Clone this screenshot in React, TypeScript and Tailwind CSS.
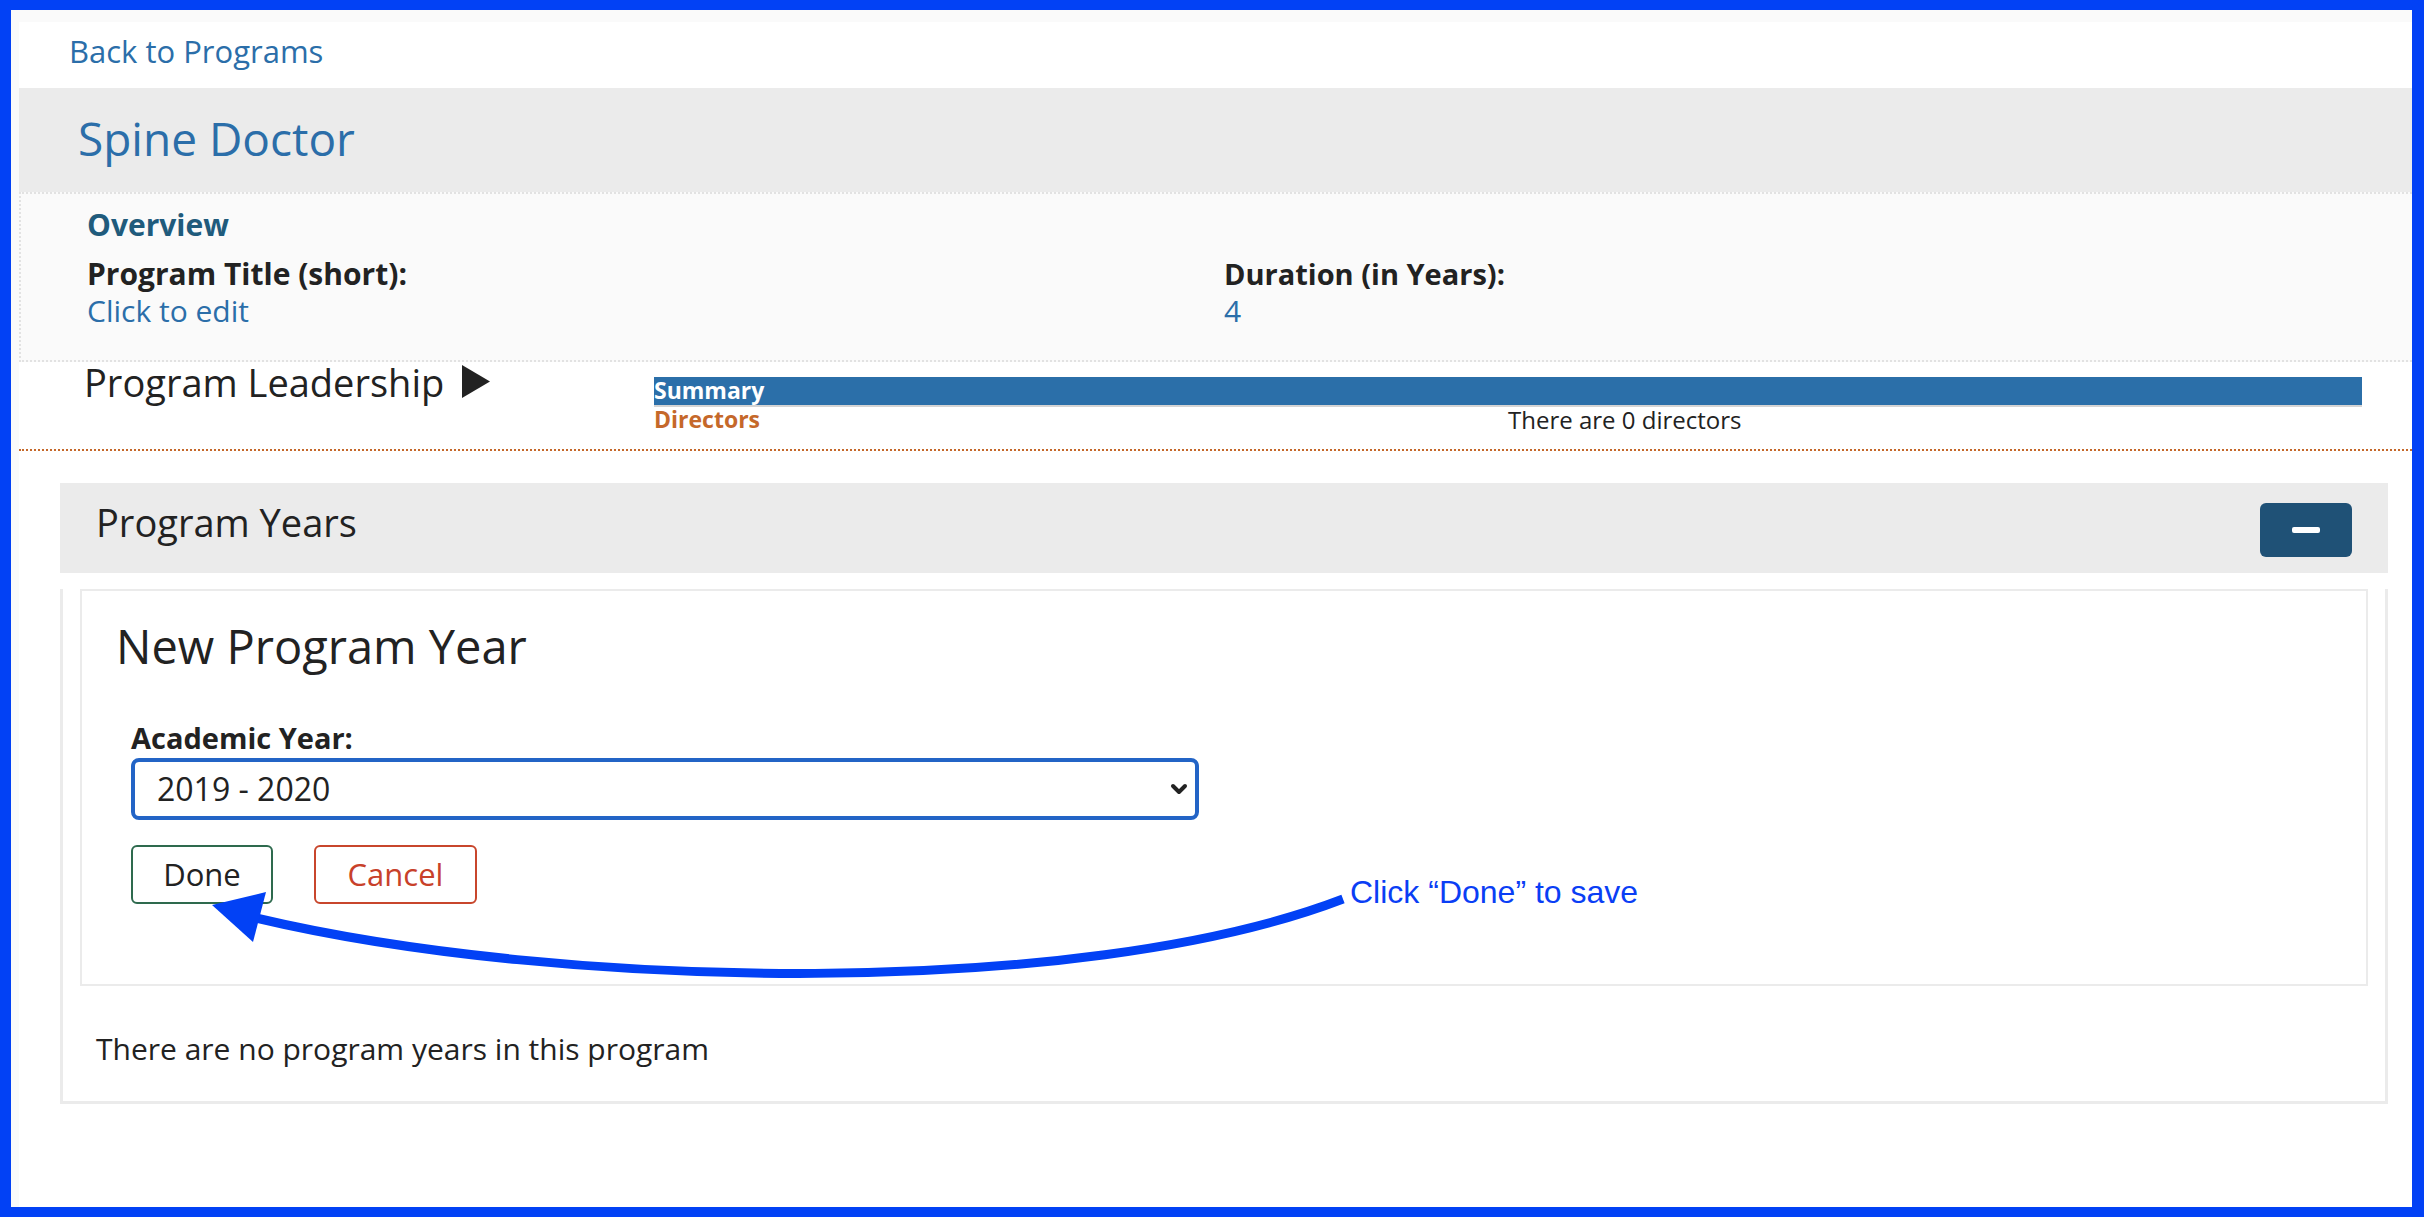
import { ChevronDown } from 'lucide-react';

const font = { fontFamily: '"Open Sans", Lato, sans-serif' };

function Overview() {
  return (
    <div className="border-y-2 border-l-2 border-dotted border-[#e2e2e2] bg-[#fafafa] pb-[30px] pl-[66px] pr-[51px] pt-[16px]">
      <h2 className="text-[30px] font-bold leading-[30px] text-[#1f5b7c]">Overview</h2>
      <div className="mt-[16px] grid grid-cols-2">
        <div>
          <div className="text-[30px] font-bold leading-[35px] text-[#222]">Program Title (short):</div>
          <div className="text-[30px] leading-[39px] text-[#2b6ea9]">Click to edit</div>
        </div>
        <div>
          <div className="text-[29px] font-bold leading-[35px] text-[#222]">Duration (in Years):</div>
          <div className="text-[30px] leading-[39px] text-[#2b6ea9]">4</div>
        </div>
      </div>
    </div>
  );
}

function Leadership() {
  return (
    <div className="flex h-[89px] border-b-2 border-dotted border-[#c5682a]">
      <div className="flex w-[635px] shrink-0 items-start pl-[65px]">
        <span className="mt-[1px] text-[38px] leading-[38px] text-[#222]">Program Leadership</span>
        <svg className="ml-[18px] mt-[3px]" width="28" height="33" viewBox="0 0 28 33">
          <polygon points="0,0 28,16.5 0,33" fill="#222" />
        </svg>
      </div>
      <div className="mt-[15px] w-[1708px]">
        <div className="h-[30px] border-b-2 border-[#d4d4d4] bg-[#2b6fa9] text-[23px] font-bold leading-[26px] text-white">
          Summary
        </div>
        <div className="grid grid-cols-2 leading-[25px]">
          <span className="text-[23px] font-bold text-[#c5682a]">Directors</span>
          <span className="text-[24px] text-[#222]">There are 0 directors</span>
        </div>
      </div>
    </div>
  );
}

function NewProgramYear() {
  return (
    <div className="mx-[17px] mt-[16px] border-2 border-[#ebebeb] pb-[80px] pl-[34px] pt-[33px]">
      <h3 className="text-[47px] font-medium leading-[45px] text-[#222]">New Program Year</h3>
      <div className="mt-[53px] pl-[15px]">
        <label className="block text-[29px] font-bold leading-[31px] text-[#222]">Academic Year:</label>
        <div className="relative mt-[5px] w-[1068px]">
          <select
            className="h-[62px] w-full appearance-none rounded-[8px] border-4 border-[#2364c6] bg-white pl-[22px] text-[32px] text-[#222] outline-none"
            defaultValue="2019"
          >
            <option value="2019">2019 - 2020</option>
          </select>
          <ChevronDown
            className="pointer-events-none absolute right-[8px] top-[19px] text-[#222]"
            size={24}
            strokeWidth={4}
          />
        </div>
        <div className="mt-[25px] flex gap-[41px]">
          <button className="h-[59px] w-[142px] rounded-[6px] border-2 border-[#2e6a4e] bg-white text-[31px] leading-[31px] text-[#222]">
            Done
          </button>
          <button className="h-[59px] w-[163px] rounded-[6px] border-2 border-[#c8462c] bg-white text-[31px] leading-[31px] text-[#c8412a]">
            Cancel
          </button>
        </div>
      </div>
    </div>
  );
}

function ProgramYears() {
  return (
    <div className="ml-[41px] mr-[24px] mt-[32px]">
      <div className="flex h-[90px] items-start justify-between bg-[#ebebeb] pl-[36px] pr-[36px] pt-[20px]">
        <span className="text-[38px] leading-[38px] text-[#222]">Program Years</span>
        <button className="flex h-[54px] w-[92px] items-center justify-center rounded-[6px] bg-[#1f5176]">
          <span className="block h-[6px] w-[28px] rounded-[2px] bg-white" />
        </button>
      </div>
      <div className="border-x-[3px] border-b-[3px] border-[#ebebeb] pb-[37px]">
        <NewProgramYear />
        <p className="mt-[48px] pl-[33px] text-[30px] leading-[30px] text-[#222]">
          There are no program years in this program
        </p>
      </div>
    </div>
  );
}

export default function App() {
  return (
    <div className="relative h-[1220px] w-[2424px] overflow-hidden bg-white" style={font}>
      <div className="h-[1217px] border-b-[10px] border-l-[11px] border-r-[12px] border-t-[10px] border-[#0241f5] bg-[#fafafa] pl-[8px] pt-[12px]">
        <div className="flex h-full flex-col bg-white">
          <div className="h-[66px] pl-[50px] pt-[15px]">
            <a className="text-[31px] leading-[28px] text-[#2b6ea9]" href="#">
              Back to Programs
            </a>
          </div>
          <div className="h-[104px] bg-[#ebebeb] pl-[59px] pt-[27px]">
            <h1 className="text-[46px] font-medium leading-[46px] text-[#2b6ea9]">Spine Doctor</h1>
          </div>
          <Overview />
          <Leadership />
          <ProgramYears />
        </div>
      </div>

      {/* annotation overlay */}
      <svg className="pointer-events-none absolute left-0 top-0" width="2424" height="1220" viewBox="0 0 2424 1220">
        <path d="M1343 899 C 1080 1000, 560 990, 256 918" fill="none" stroke="#0241f5" strokeWidth="9" />
        <polygon points="212,905 266,892 253,942" fill="#0241f5" />
      </svg>
      <span
        className="absolute left-[1350px] top-[876px] text-[32px] leading-[32px] text-[#0a3ef5]"
        style={{ fontFamily: '"Liberation Sans", Arial, sans-serif' }}
      >
        Click “Done” to save
      </span>
    </div>
  );
}
